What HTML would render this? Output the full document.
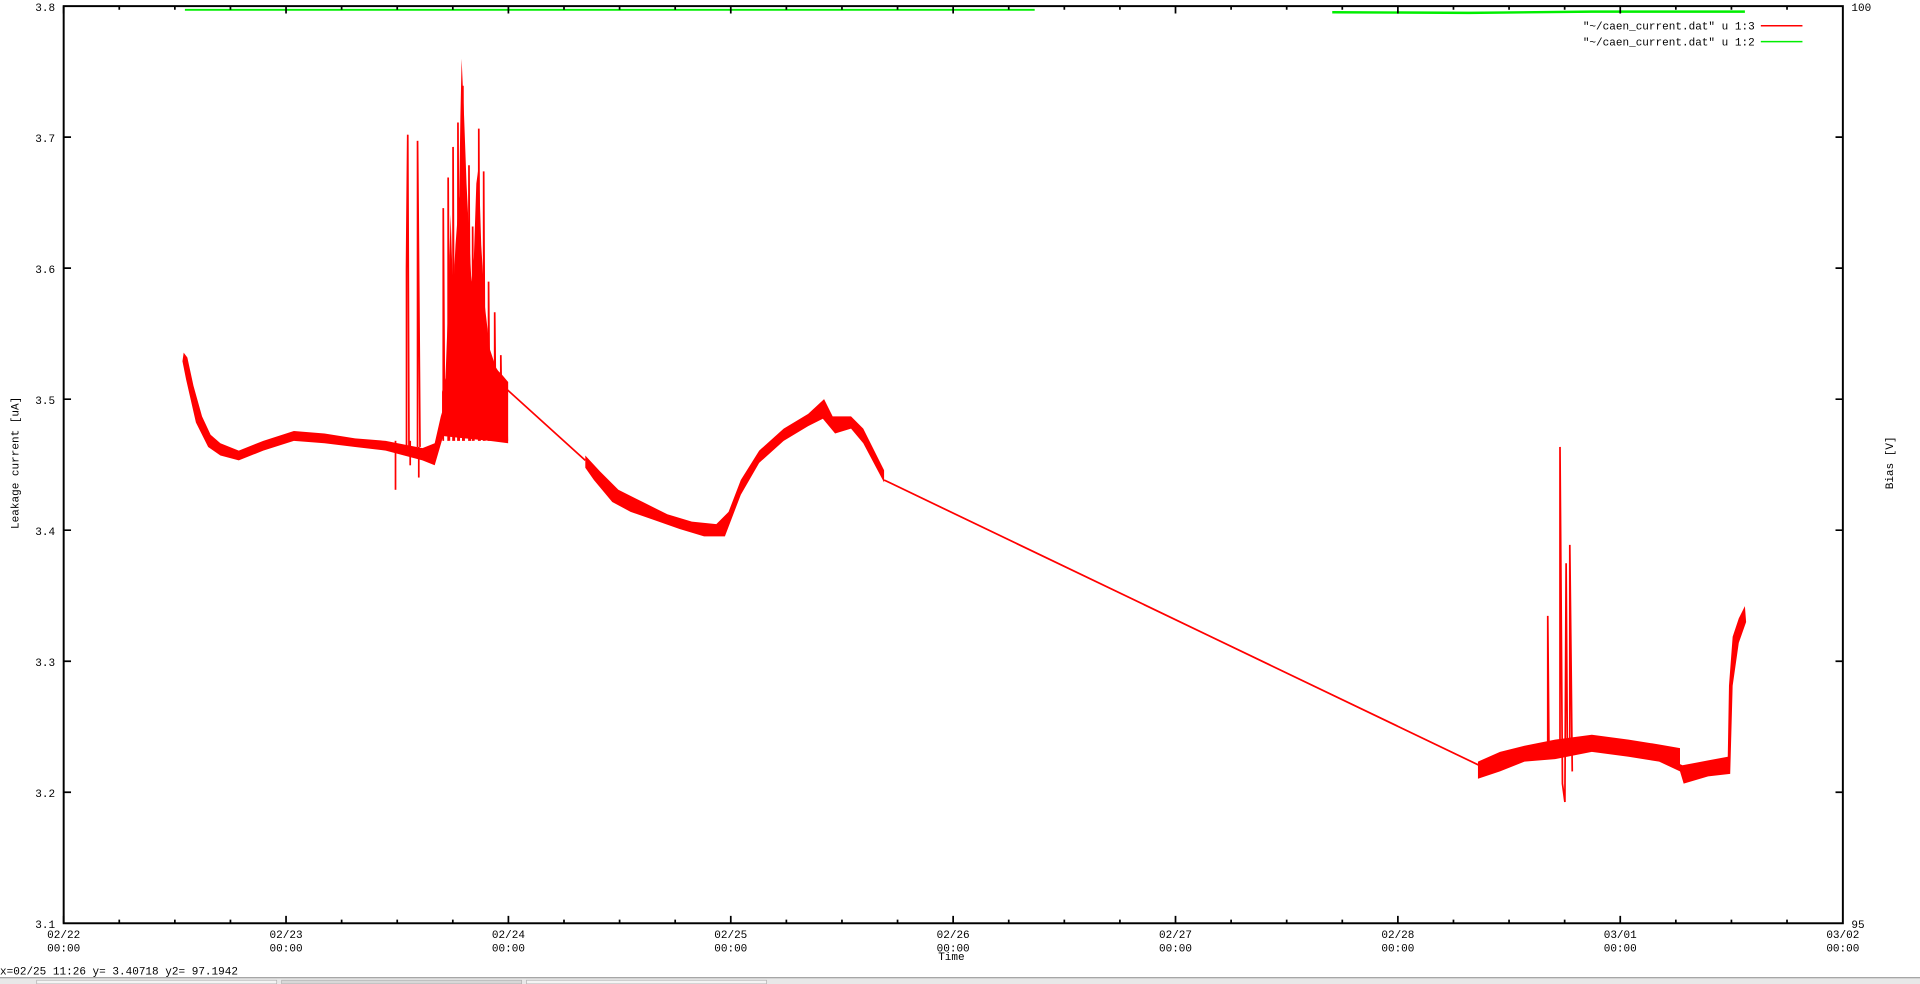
<!DOCTYPE html>
<html><head><meta charset="utf-8"><style>
html,body{margin:0;padding:0;background:#fff;overflow:hidden}
svg{display:block}
text{font-family:"Liberation Mono","DejaVu Sans Mono",monospace;font-size:9px;fill:#000}
</style></head><body>
<svg width="1920" height="984" viewBox="0 0 1568 803.6" preserveAspectRatio="none">
<rect x="0" y="0" width="1568" height="803.6" fill="#fff"/>
<polyline points="151,8 845,8" stroke="#00ee00" stroke-width="1.6" fill="none"/>
<polyline points="1088,10 1200,10.5 1300,9.5 1425,9.5" stroke="#00ee00" stroke-width="2" fill="none"/>
<g fill="#f00" stroke="none">
<polygon points="150,288 153,292 158,315 165,340 172,355 180,362 195,368 215,360 240,352 265,354 290,358 315,360 330,363 345,366 355,362 360,340 363,330 366,250 368,175 370,240 372,200 375,160 376,95 377,48 379,95 381,150 383,190 385,230 387,210 389,150 391,135 393,200 396,250 400,285 405,300 410,308 414,312 415,362 400,360 380,358 362,356 355,380 345,376 330,372 315,368 290,365 265,362 240,360 215,368 195,376 180,372 170,365 160,345 152,310 149,295"/>
<polygon points="361,356 361,320 366,300 372,280 378,260 386,270 392,250 398,280 404,300 410,306 415,312 415,360 400,358 380,358"/>
<polygon points="478,372 490,385 505,400 525,410 545,420 565,426 585,428 595,418 605,392 620,368 640,350 660,338 673,326 680,340 695,340 705,350 722,384 722,394 705,362 695,350 682,354 672,342 660,348 640,360 620,378 605,404 592,438 575,438 555,432 535,425 515,418 500,410 485,392 478,382"/>
<polygon points="1207,622 1225,614 1245,609 1270,604 1300,600 1330,604 1355,608 1372,611 1372,624 1374,625 1395,621 1411,618 1412,560 1415,520 1420,505 1425,495 1426,508 1420,525 1415,560 1413,632 1395,634 1375,640 1372,630 1355,622 1330,618 1300,614 1270,620 1245,622 1225,630 1207,636"/>
</g>
<g stroke="#f00" stroke-width="1.4" fill="none">
<polyline points="414,318 478,376"/>
<polyline points="722,392 1208,625"/>
<polyline points="323,360 323,400"/>
<polyline points="332,365 332,220 333,110 334,365"/>
<polyline points="341,365 341,115 343,365"/>
<polyline points="342,365 342,390"/>
<polyline points="335,360 335,380"/>
<polyline points="362,360 362,170 363,345"/>
<polyline points="366,360 366,145 367,360"/>
<polyline points="370,360 370,120 371,360"/>
<polyline points="374,360 374,100 375,360"/>
<polyline points="378,360 378,70 379,360"/>
<polyline points="383,360 383,135 384,360"/>
<polyline points="386,360 386,185 387,360"/>
<polyline points="391,360 391,105 392,360"/>
<polyline points="395,360 395,140 396,360"/>
<polyline points="399,360 399,230 400,360"/>
<polyline points="404,360 404,255 405,360"/>
<polyline points="409,360 409,290 410,360"/>
<polyline points="1264,610 1264,503 1265,612"/>
<polyline points="1274,605 1274,365 1276,640 1278,655 1279,460 1280,612"/>
<polyline points="1282,605 1282,445 1284,630"/>
</g>
<rect x="52" y="5" width="1453" height="749" fill="none" stroke="#000" stroke-width="1.6"/>
<g stroke="#000" stroke-width="1.4">
<path d="M52,754v-6M97.4,754v-3M142.8,754v-3M188.2,754v-3M233.6,754v-6M279,754v-3M324.4,754v-3M369.8,754v-3M415.2,754v-6M460.6,754v-3M506,754v-3M551.4,754v-3M596.8,754v-6M642.2,754v-3M687.6,754v-3M733,754v-3M778.4,754v-6M823.8,754v-3M869.2,754v-3M914.6,754v-3M960,754v-6M1005.4,754v-3M1050.8,754v-3M1096.2,754v-3M1141.6,754v-6M1187,754v-3M1232.4,754v-3M1277.8,754v-3M1323.2,754v-6M1368.6,754v-3M1414,754v-3M1459.4,754v-3"/>
<path d="M52,5v6M97.4,5v3M142.8,5v3M188.2,5v3M233.6,5v6M279,5v3M324.4,5v3M369.8,5v3M415.2,5v6M460.6,5v3M506,5v3M551.4,5v3M596.8,5v6M642.2,5v3M687.6,5v3M733,5v3M778.4,5v6M823.8,5v3M869.2,5v3M914.6,5v3M960,5v6M1005.4,5v3M1050.8,5v3M1096.2,5v3M1141.6,5v6M1187,5v3M1232.4,5v3M1277.8,5v3M1323.2,5v6M1368.6,5v3M1414,5v3M1459.4,5v3"/>
<path d="M52,112h6M52,219h6M52,326h6M52,433h6M52,540h6M52,647h6M1505,112h-6M1505,219h-6M1505,326h-6M1505,433h-6M1505,540h-6M1505,647h-6"/>
</g>
<g text-anchor="end">
<text x="45" y="9">3.8</text><text x="45" y="116">3.7</text><text x="45" y="223">3.6</text><text x="45" y="330">3.5</text><text x="45" y="437">3.4</text><text x="45" y="544">3.3</text><text x="45" y="651">3.2</text><text x="45" y="758">3.1</text>
</g>
<text x="1512" y="9">100</text>
<text x="1512" y="758">95</text>
<g text-anchor="middle">
<text x="52" y="766">02/22</text><text x="52" y="777">00:00</text>
<text x="233.6" y="766">02/23</text><text x="233.6" y="777">00:00</text>
<text x="415.2" y="766">02/24</text><text x="415.2" y="777">00:00</text>
<text x="596.8" y="766">02/25</text><text x="596.8" y="777">00:00</text>
<text x="778.4" y="766">02/26</text><text x="778.4" y="777">00:00</text>
<text x="960" y="766">02/27</text><text x="960" y="777">00:00</text>
<text x="1141.6" y="766">02/28</text><text x="1141.6" y="777">00:00</text>
<text x="1323.2" y="766">03/01</text><text x="1323.2" y="777">00:00</text>
<text x="1505" y="766">03/02</text><text x="1505" y="777">00:00</text>
<text x="777" y="784">Time</text>
</g>
<text transform="translate(15,378) rotate(-90)" text-anchor="middle">Leakage current [uA]</text>
<text transform="translate(1546,378) rotate(-90)" text-anchor="middle">Bias [V]</text>
<text x="1433" y="24" text-anchor="end">"~/caen_current.dat" u 1:3</text>
<line x1="1438" y1="21" x2="1472" y2="21" stroke="#f00" stroke-width="1.2"/>
<text x="1433" y="37" text-anchor="end">"~/caen_current.dat" u 1:2</text>
<line x1="1438" y1="34" x2="1472" y2="34" stroke="#00ee00" stroke-width="1.2"/>
<text x="0" y="796">x=02/25 11:26 y= 3.40718 y2= 97.1942</text>
<line x1="0" y1="798.5" x2="1568" y2="798.5" stroke="#999" stroke-width="1"/>
<rect x="0" y="799" width="1568" height="5" fill="#e8e8e8"/>
<rect x="30" y="800.5" width="196" height="3" fill="#f4f4f4" stroke="#aaa" stroke-width="0.5"/>
<rect x="230" y="800.5" width="196" height="3" fill="#d8d8d8" stroke="#aaa" stroke-width="0.5"/>
<rect x="430" y="800.5" width="196" height="3" fill="#f4f4f4" stroke="#aaa" stroke-width="0.5"/>
</svg>
</body></html>
